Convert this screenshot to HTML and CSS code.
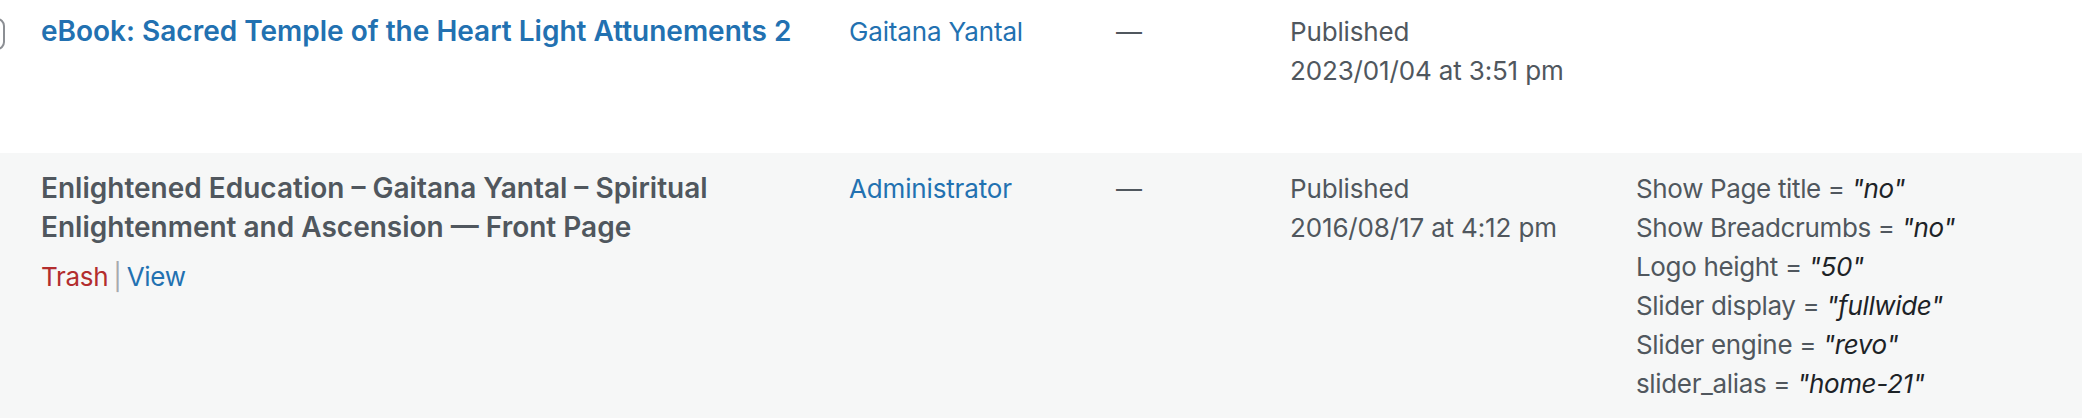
FILE: index.html
```html
<!DOCTYPE html>
<html lang="en">
<head>
    <meta charset="utf-8" />
    <title>Pages</title>
    <link rel="stylesheet" href="styles.css">
</head>
<body>
    <div class="postList">
        <div class="postRow">
            <div class="checkCol"><span class="cb"></span></div>
            <div class="col titleCol">
                <a class="rowTitle" href="#">eBook: Sacred Temple of the Heart Light Attunements 2</a>
            </div>
            <div class="col authorCol"><a href="#">Gaitana Yantal</a></div>
            <div class="col tagCol">—</div>
            <div class="col dateCol">Published<br />2023/01/04 at 3:51 pm</div>
            <div class="col metaCol"></div>
        </div>
        <div class="postRow alt">
            <div class="checkCol"></div>
            <div class="col titleCol">
                <strong class="rowTitle">Enlightened Education – Gaitana Yantal – Spiritual Enlightenment and Ascension — Front Page</strong>
                <div class="rowActions"><a class="trash" href="#">Trash</a> <span class="sep">|</span> <a href="#">View</a></div>
            </div>
            <div class="col authorCol"><a href="#">Administrator</a></div>
            <div class="col tagCol">—</div>
            <div class="col dateCol">Published<br />2016/08/17 at 4:12 pm</div>
            <div class="col metaCol">
                <div>Show Page title = <em>"no"</em></div>
                <div>Show Breadcrumbs = <em>"no"</em></div>
                <div>Logo height = <em>"50"</em></div>
                <div>Slider display = <em>"fullwide"</em></div>
                <div>Slider engine = <em>"revo"</em></div>
                <div>slider_alias = <em>"home-21"</em></div>
            </div>
        </div>
    </div>
</body>
</html>
```

FILE: styles.css
```css
html,body{margin:0;padding:0;background:#fff;}
body{font-family:Inter,"Noto Sans",sans-serif;font-size:26px;line-height:39px;color:#50575e;letter-spacing:-0.15px;overflow:hidden;}
a{color:#2271b1;text-decoration:none;}

.postList{margin-top:-4px;}
.postRow{display:grid;grid-template-columns:21px 808px 267px 174px 346px 1fr;background:#fff;min-height:157px;box-sizing:border-box;}
.postRow.alt{background:#f6f7f7;min-height:270px;}

.checkCol{overflow:hidden;padding-top:22px;}
.cb{display:block;width:32px;height:32px;margin-left:-27px;box-sizing:border-box;border:2px solid #8c8f94;border-radius:8px;background:#fff;}

.col{padding:16px 20px;}
.rowTitle{display:block;font-size:28px;font-weight:600;letter-spacing:0;margin-bottom:5px;}
strong.rowTitle{color:#50575e;}
.rowActions{padding-top:5px;letter-spacing:-0.3px;}
.rowActions .trash{color:#b32d2e;}
.rowActions .sep{color:#a7aaad;margin:0 -2px;}
.metaCol{letter-spacing:-0.35px;}
.metaCol em{color:#1d2327;}
```
